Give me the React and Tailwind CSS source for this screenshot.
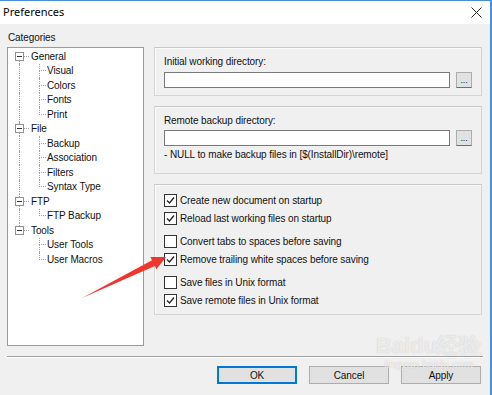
import React from "react";

const tree = [
  { text: "General", level: 0, trunk: "bottom" },
  { text: "Visual", level: 1, trunk: true },
  { text: "Colors", level: 1, trunk: true },
  { text: "Fonts", level: 1, trunk: true },
  { text: "Print", level: 1, trunk: true, last: true },
  { text: "File", level: 0, trunk: "full" },
  { text: "Backup", level: 1, trunk: true },
  { text: "Association", level: 1, trunk: true },
  { text: "Filters", level: 1, trunk: true },
  { text: "Syntax Type", level: 1, trunk: true, last: true },
  { text: "FTP", level: 0, trunk: "full" },
  { text: "FTP Backup", level: 1, trunk: true, last: true },
  { text: "Tools", level: 0, trunk: "top" },
  { text: "User Tools", level: 1, trunk: false },
  { text: "User Macros", level: 1, trunk: false, last: true },
];

const dot = "border-dotted border-[#a0a0a0]";

function TreeRow({ item }) {
  if (item.level === 0) {
    const top = item.trunk === "full" || item.trunk === "top";
    const bottom = item.trunk === "full" || item.trunk === "bottom";
    return (
      <div className="flex h-[14.5px] items-stretch">
        <div className="flex w-[16px] flex-col">
          <div className={`ml-[11px] flex-1 ${top ? "border-l " + dot : ""}`} />
          <div className="ml-[7px] flex h-[9px] w-[9px] items-center justify-center border border-[#919191] bg-white">
            <div className="h-px w-[5px] bg-[#333]" />
          </div>
          <div className={`ml-[11px] flex-1 ${bottom ? "border-l " + dot : ""}`} />
        </div>
        <div className="flex w-[7px] items-center">
          <div className={`w-[5px] border-t ${dot}`} />
        </div>
        <span className="flex items-center">{item.text}</span>
      </div>
    );
  }
  return (
    <div className="flex h-[14.5px] items-stretch">
      <div className="w-[23px]">
        <div className={`ml-[11px] h-full ${item.trunk ? "border-l " + dot : ""}`} />
      </div>
      <div className="flex w-[16px] flex-col">
        <div className={`ml-[8px] w-[7px] flex-1 border-l border-b ${dot}`} />
        <div className={`ml-[8px] flex-1 ${item.last ? "" : "border-l " + dot}`} />
      </div>
      <span className="flex items-center">{item.text}</span>
    </div>
  );
}

function Check({ checked, label, className = "" }) {
  return (
    <div className={`flex h-[14px] items-center gap-[3px] ${className}`}>
      <div className="flex h-[13px] w-[13px] items-center justify-center border border-[#333] bg-white">
        {checked && (
          <svg width="9" height="9" viewBox="0 0 9 9">
            <path d="M1 4.5 L3.5 7 L8 1.5" fill="none" stroke="#222" strokeWidth="1.3" />
          </svg>
        )}
      </div>
      <span>{label}</span>
    </div>
  );
}

function PathField() {
  return (
    <div className="flex items-center gap-[6px]">
      <div className="h-[16px] flex-1 border border-[#7a7a7a] bg-white" />
      <div className="flex h-[16px] w-[16px] items-end justify-center border border-[#adadad] border-b-[#6d6d6d] bg-[#e1e1e1] pb-[2px] text-[9px] leading-none">
        ...
      </div>
    </div>
  );
}

function Group({ className = "", children }) {
  return (
    <div className={`border border-[#d5d5d5] border-t-[#c8c8c8] shadow-[inset_1px_1px_0_#fafafa] ${className}`}>
      {children}
    </div>
  );
}

function Btn({ children, primary }) {
  return (
    <div
      className={`flex h-[18px] w-[80px] items-center justify-center bg-[#e1e1e1] ${
        primary ? "border-2 border-[#0078d7]" : "border border-[#adadad]"
      }`}
    >
      {children}
    </div>
  );
}

export default function App() {
  return (
    <div
      className="relative h-[395px] w-[492px] overflow-hidden border-t border-r-2 border-[#4a90d9] bg-[#f0f0f0] text-[10px] tracking-[-0.1px] text-[#111]"
      style={{ fontFamily: "'Liberation Sans', Arial, sans-serif" }}
    >
      {/* title bar */}
      <div className="flex h-[23px] items-center justify-between bg-white pl-[3px] pr-[8px]">
        <span className="text-[11px] tracking-normal text-black" style={{ fontFamily: "'Noto Sans', sans-serif" }}>
          Preferences
        </span>
        <svg width="11" height="11" viewBox="0 0 11 11">
          <path d="M0.5 0.5 L10.5 10.5 M10.5 0.5 L0.5 10.5" stroke="#222" strokeWidth="1" />
        </svg>
      </div>

      <div className="flex gap-[10px] pl-[7px] pr-[8px] pt-[6px]">
        {/* categories */}
        <div className="flex w-[137px] flex-col">
          <div className="h-[15px] pl-[1px] leading-[15px]">Categories</div>
          <div className="mt-[2px] h-[299px] border border-[#9a9a9a] bg-white pt-[1px]">
            {tree.map((item) => (
              <TreeRow key={item.text} item={item} />
            ))}
          </div>
        </div>

        {/* settings */}
        <div className="flex flex-1 flex-col gap-[10px] pt-[17px]">
          <Group className="h-[49px] px-[9px] pt-[7px]">
            <div className="mb-[3px] h-[14px] leading-[14px]">Initial working directory:</div>
            <PathField />
          </Group>
          <Group className="h-[68px] px-[9px] pt-[7px]">
            <div className="mb-[2px] h-[14px] leading-[14px]">Remote backup directory:</div>
            <PathField />
            <div className="mt-[2px] h-[14px] leading-[14px]">
              - NULL to make backup files in [$(InstallDir)\remote]
            </div>
          </Group>
          <Group className="h-[131px] px-[9px] pt-[8px]">
            <Check checked label="Create new document on startup" />
            <Check checked label="Reload last working files on startup" className="mt-[4px]" />
            <Check label="Convert tabs to spaces before saving" className="mt-[9px]" />
            <Check checked label="Remove trailing white spaces before saving" className="mt-[4px]" />
            <Check label="Save files in Unix format" className="mt-[9px]" />
            <Check checked label="Save remote files in Unix format" className="mt-[4px]" />
          </Group>
        </div>
      </div>

      {/* separator */}
      <div className="mx-[7px] mt-[10px] h-[2px] border-t border-[#a0a0a0] border-b border-b-white" />

      <div className="flex justify-end gap-[12px] pr-[9px] pt-[8px]">
        <Btn primary>OK</Btn>
        <Btn>Cancel</Btn>
        <Btn>Apply</Btn>
      </div>

      {/* watermark */}
      <div className="pointer-events-none absolute left-[376px] top-[334px] flex flex-col items-center leading-none text-white/70 [text-shadow:0_0_1px_#bbb]">
        <span className="text-[22px] font-bold tracking-normal">Baidu经验</span>
        <span className="mt-[2px] text-[11px] tracking-normal">jingyan.baidu.com</span>
      </div>

      {/* red arrow */}
      <svg className="pointer-events-none absolute left-0 top-0" width="492" height="395">
        <polygon
          points="82,297 152,259.3 150.4,255.9 166,256 156.4,268.2 154.8,264.9"
          fill="#f0362c"
        />
      </svg>
    </div>
  );
}
